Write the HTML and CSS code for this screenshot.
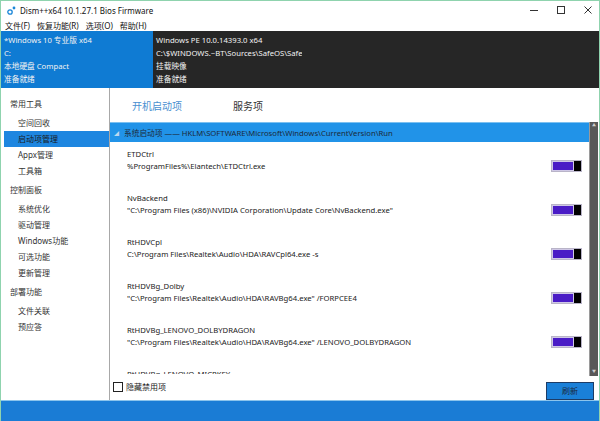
FILE: index.html
```html
<!DOCTYPE html>
<html lang="zh-CN">
<head>
<meta charset="UTF-8">
<title>Dism++x64 10.1.27.1 Bios Firmware</title>
<link rel="stylesheet" href="styles.css">
</head>
<body>
<div class="window">
    <div class="titlebar">
        <svg class="app-icon" width="9" height="9" viewBox="0 0 9 9">
            <circle cx="3" cy="6" r="2.2" fill="none" stroke="#1a86d8" stroke-width="1.3"/>
            <circle cx="7" cy="2" r="1.4" fill="#1a86d8"/>
        </svg>
        <span class="title">Dism++x64 10.1.27.1 Bios Firmware</span>
        <div class="controls">
            <svg width="10" height="10" viewBox="0 0 10 10"><path d="M1 5.5h8" stroke="#333" stroke-width="1"/></svg>
            <svg width="10" height="10" viewBox="0 0 10 10"><rect x="1.5" y="1.5" width="7" height="7" fill="none" stroke="#333" stroke-width="1"/></svg>
            <svg width="10" height="10" viewBox="0 0 10 10"><path d="M1.5 1.5l7 7M8.5 1.5l-7 7" stroke="#333" stroke-width="1"/></svg>
        </div>
    </div>
    <div class="menubar">
        <span>文件(F)</span>
        <span>恢复功能(R)</span>
        <span>选项(O)</span>
        <span>帮助(H)</span>
    </div>
    <div class="info">
        <div class="info-col current">
            <div>*Windows 10 专业版 x64</div>
            <div>C:</div>
            <div>本地硬盘 Compact</div>
            <div>准备就绪</div>
        </div>
        <div class="info-col">
            <div>Windows PE 10.0.14393.0 x64</div>
            <div>C:\$WINDOWS.~BT\Sources\SafeOS\SafeOS.Mount</div>
            <div>挂载映像</div>
            <div>准备就绪</div>
        </div>
        <div class="info-col"></div>
    </div>
    <div class="main">
        <div class="sidebar">
            <div class="group">
                <div class="group-title">常用工具</div>
                <div class="item">空间回收</div>
                <div class="item selected">启动项管理</div>
                <div class="item">Appx管理</div>
                <div class="item">工具箱</div>
            </div>
            <div class="group">
                <div class="group-title">控制面板</div>
                <div class="item">系统优化</div>
                <div class="item">驱动管理</div>
                <div class="item">Windows功能</div>
                <div class="item">可选功能</div>
                <div class="item">更新管理</div>
            </div>
            <div class="group">
                <div class="group-title">部署功能</div>
                <div class="item">文件关联</div>
                <div class="item">预应答</div>
            </div>
        </div>
        <div class="content">
            <div class="tabs">
                <span class="tab active">开机启动项</span>
                <span class="tab">服务项</span>
            </div>
            <div class="list-wrap">
                <div class="list">
                    <div class="list-head"><span class="arrow">◢</span>系统启动项 —— HKLM\SOFTWARE\Microsoft\Windows\CurrentVersion\Run</div>
                    <div class="entry">
                        <div class="entry-text">
                            <div>ETDCtrl</div>
                            <div>%ProgramFiles%\Elantech\ETDCtrl.exe</div>
                        </div>
                        <div class="toggle"><span class="track"></span><span class="thumb"></span></div>
                    </div>
                    <div class="entry">
                        <div class="entry-text">
                            <div>NvBackend</div>
                            <div>"C:\Program Files (x86)\NVIDIA Corporation\Update Core\NvBackend.exe"</div>
                        </div>
                        <div class="toggle"><span class="track"></span><span class="thumb"></span></div>
                    </div>
                    <div class="entry">
                        <div class="entry-text">
                            <div>RtHDVCpl</div>
                            <div>C:\Program Files\Realtek\Audio\HDA\RAVCpl64.exe -s</div>
                        </div>
                        <div class="toggle"><span class="track"></span><span class="thumb"></span></div>
                    </div>
                    <div class="entry">
                        <div class="entry-text">
                            <div>RtHDVBg_Dolby</div>
                            <div>"C:\Program Files\Realtek\Audio\HDA\RAVBg64.exe" /FORPCEE4</div>
                        </div>
                        <div class="toggle"><span class="track"></span><span class="thumb"></span></div>
                    </div>
                    <div class="entry">
                        <div class="entry-text">
                            <div>RtHDVBg_LENOVO_DOLBYDRAGON</div>
                            <div>"C:\Program Files\Realtek\Audio\HDA\RAVBg64.exe" /LENOVO_DOLBYDRAGON</div>
                        </div>
                        <div class="toggle"><span class="track"></span><span class="thumb"></span></div>
                    </div>
                    <div class="entry last">
                        <div class="entry-text">
                            <div>RtHDVBg_LENOVO_MICPKEY</div>
                        </div>
                    </div>
                </div>
                <div class="scrollbar">
                    <span class="sb-arrow">▲</span>
                    <span class="sb-arrow">▼</span>
                </div>
            </div>
            <div class="footer">
                <label class="check"><span class="box"></span>隐藏禁用项</label>
                <button class="refresh">刷新</button>
            </div>
        </div>
    </div>
    <div class="statusbar"></div>
</div>
</body>
</html>
```
FILE: styles.css
```css
html, body {
    margin: 0;
    width: 600px;
    height: 421px;
    overflow: hidden;
}
body {
    font-family: "Noto Sans", "Noto Sans CJK SC", sans-serif;
    font-size: 8px;
    color: #222;
    background-color: #fff;
}
.window {
    height: 421px;
    display: flex;
    flex-direction: column;
    border: 1px solid #8fd3ae;
    border-bottom: 0;
    box-sizing: border-box;
}
.titlebar {
    height: 18px;
    display: flex;
    align-items: center;
    background-color: #fff;
}
.app-icon {
    margin-left: 6px;
    margin-right: 4px;
}
.title {
    font-size: 8px;
    color: #111;
}
.controls {
    margin-left: auto;
    display: flex;
    gap: 17px;
    margin-right: 6px;
}
.menubar {
    height: 12px;
    display: flex;
    align-items: center;
    gap: 7px;
    padding-left: 4px;
    color: #111;
}
.info {
    height: 57px;
    display: flex;
    color: #f2f2f2;
    background-color: #262626;
    font-size: 7.7px;
}
.info-col {
    width: 149px;
    padding: 3px 0 0 3px;
    line-height: 13px;
    white-space: nowrap;
    overflow: hidden;
    box-sizing: border-box;
}
.info-col.current {
    width: 152px;
    padding-left: 3px;
    background-color: #0f7bd3;
}
.info-col:last-child {
    flex: 1;
}
.main {
    flex: 1;
    display: flex;
    min-height: 0;
}
.sidebar {
    width: 109px;
    border-right: 1px solid #a8a8a8;
    padding-top: 8px;
    color: #333;
    box-sizing: border-box;
}
.group {
    margin-bottom: 3px;
}
.group-title {
    height: 16px;
    line-height: 16px;
    padding-left: 9px;
    margin-bottom: 3px;
}
.item {
    height: 16px;
    line-height: 16px;
    padding-left: 14px;
    margin-left: 3px;
}
.item.selected {
    background-color: #1e86e0;
    color: #1a1a1a;
}
.content {
    flex: 1;
    display: flex;
    flex-direction: column;
    min-width: 0;
}
.tabs {
    height: 34px;
    display: flex;
    align-items: center;
    gap: 51px;
    padding-left: 22px;
    box-sizing: border-box;
}
.tab {
    font-size: 10px;
    color: #333;
}
.tab.active {
    color: #4a8fd0;
}
.list-wrap {
    height: 254px;
    display: flex;
}
.list {
    flex: 1;
    overflow: hidden;
    min-width: 0;
    font-size: 7.7px;
}
.list-head {
    height: 20px;
    line-height: 20px;
    background-color: #2193e8;
    border-top: 1px solid #7cc0f0;
    box-sizing: border-box;
    padding-left: 4px;
    white-space: nowrap;
    color: #1c2a3a;
}
.arrow {
    font-size: 5px;
    color: #bcd8f0;
    margin-right: 5px;
    vertical-align: 1px;
}
.entry {
    height: 44px;
    display: flex;
    align-items: flex-start;
    padding: 6px 7px 0 17px;
    box-sizing: border-box;
}
.entry-text {
    flex: 1;
    line-height: 12px;
    white-space: nowrap;
    overflow: hidden;
    color: #222;
}
.entry.last {
    height: 12px;
    overflow: hidden;
}
.toggle {
    width: 31px;
    height: 12px;
    margin-top: 12px;
    display: flex;
    border: 1px solid #b9b4c8;
    box-sizing: border-box;
}
.track {
    flex: 1;
    background-color: #4a1cc6;
    border: 1px solid #cfc8e6;
}
.thumb {
    width: 7px;
    background-color: #000;
}
.scrollbar {
    width: 8px;
    background-color: #585858;
    border-left: 1px solid #9a9a9a;
    display: flex;
    flex-direction: column;
    justify-content: space-between;
    align-items: center;
    margin-right: 1px;
}
.sb-arrow {
    font-size: 4px;
    color: #cfcfcf;
    line-height: 8px;
}
.footer {
    flex: 1;
    display: flex;
    align-items: center;
    padding: 0 5px 0 3px;
}
.check {
    display: flex;
    align-items: center;
    gap: 3px;
    color: #222;
    margin-bottom: 3px;
}
.box {
    width: 8px;
    height: 8px;
    border: 1.5px solid #222;
}
.refresh {
    margin-left: auto;
    width: 48px;
    height: 18px;
    margin-top: 5px;
    padding: 0;
    font-family: inherit;
    font-size: 8px;
    color: #1a2a40;
    background-color: #1a80d8;
    border: 1px solid #1d3c66;
}
.statusbar {
    height: 20px;
    background-color: #1a7cd5;
    border-top: 1px solid #8cc4ec;
}
```
